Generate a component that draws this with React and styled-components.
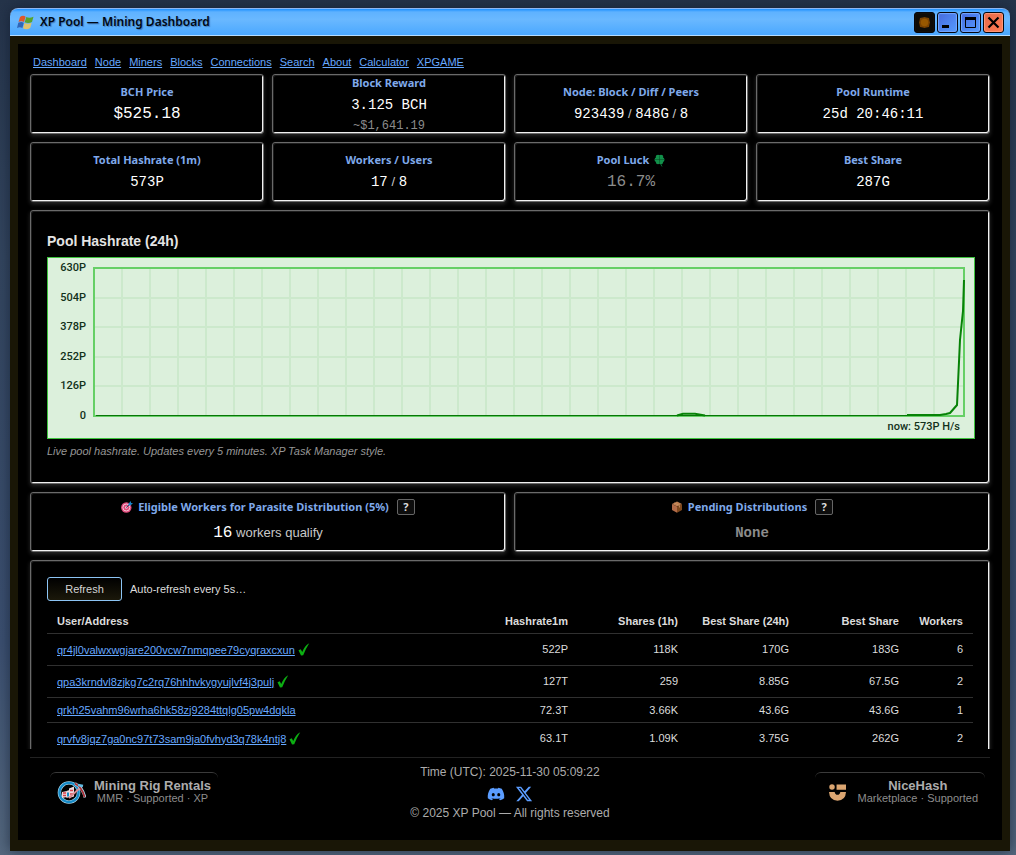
import { useState } from "react";
import styled, { createGlobalStyle } from "styled-components";
import { FaDiscord } from "react-icons/fa";
import { FaXTwitter } from "react-icons/fa6";

const GlobalStyle = createGlobalStyle`
	* {
		box-sizing: border-box;
	}

	body {
		margin: 0;
		background: #000;
		color: #dcdcdc;
		font-family: "Liberation Sans", Arial, sans-serif;
		font-size: 11px;
	}

	a {
		color: #66a8ff;
	}
`;

const Desktop = styled.div`
	height: 100vh;
	padding: 8px 6px 4px 10px;
	background: linear-gradient(#25344a, #34465f 30%, #3c5070 75%, #55687e);
`;

const Window = styled.div`
	display: flex;
	flex-direction: column;
	height: 100%;
	border-radius: 8px 8px 0 0;
	background: #191606;
	box-shadow: 0 0 14px rgba(10, 20, 40, 0.6);
`;

const TitleBar = styled.header`
	display: flex;
	align-items: center;
	gap: 6px;
	height: 28px;
	padding: 0 6px 0 7px;
	border-top: 1px solid #8fb6f2;
	border-bottom: 1px solid #b5dcff;
	border-radius: 8px 8px 0 0;
	background: linear-gradient(#1d90ff, #5fb2ff 3px, #6ab8ff 40%, #5ab0ff 70%, #4ba8ff);

	h1 {
		flex: 1;
		margin: 0;
		color: #000814;
		font: 600 12px/16px "Noto Sans", sans-serif;
		text-shadow: 1px 1px 1px rgba(0, 20, 60, 0.35);
	}
`;

const Controls = styled.div`
	display: flex;
	gap: 2px;
`;

const ControlButton = styled.button`
	display: flex;
	align-items: center;
	justify-content: center;
	width: 21px;
	height: 21px;
	padding: 0;
	border: 1px solid #05070d;
	border-radius: 3px;
	background: ${(props) => props.$background};
	box-shadow: inset 0 0 1px 1px ${(props) => props.$edge};
`;

const Body = styled.main`
	display: flex;
	flex: 1;
	flex-direction: column;
	min-height: 0;
	margin: 8px 8px 11px;
	background: #000;
`;

const Scroll = styled.div`
	display: flex;
	flex: 1;
	flex-direction: column;
	gap: 8px;
	min-height: 0;
	padding: 10px 12px 0;
	overflow: auto;
	scrollbar-width: none;

	> * {
		flex-shrink: 0;
	}
`;

const Nav = styled.nav`
	display: flex;
	gap: 8px;
	height: 12px;
	padding: 0 3px;
	line-height: 16px;
`;

const CardGrid = styled.div`
	display: grid;
	grid-template-columns: repeat(${(props) => props.$columns}, 1fr);
	gap: 8px;
`;

const Panel = styled.section`
	padding: 16px 14px 16px 16px;
	border: 1px solid #6a6a6a;
	border-radius: 3px;
	background: #000;
	box-shadow: inset -1px -1px 0 #f2f2f2, inset 1px 1px 0 #1e1e1e,
		0 2px 4px rgba(255, 255, 255, 0.16);
`;

const Card = styled(Panel)`
	display: flex;
	flex-direction: column;
	align-items: center;
	justify-content: center;
	gap: ${(props) => (props.$wide ? 8 : 4)}px;
	height: 60px;
	padding: 0 0 ${(props) => (props.$wide ? 2 : 0)}px;
`;

const CardTitle = styled.h2`
	display: flex;
	align-items: center;
	gap: 5px;
	margin: 0;
	color: #7fa9ea;
	font: 700 11px/16px "Noto Sans", sans-serif;
`;

const CardValue = styled.div`
	color: ${(props) => (props.$muted ? "#8c8c8c" : "#fff")};
	font: ${(props) => (props.$bold ? 700 : 400)} ${(props) => props.$size || 14}px/20px
		"Liberation Mono", monospace;

	span {
		color: #c8c8c8;
		font: 13px/20px "Liberation Sans", sans-serif;
	}
`;

const CardNote = styled.div`
	color: #8c8c8c;
	font: 12px/14px "Liberation Mono", monospace;
`;

const HelpButton = styled.button`
	width: 18px;
	height: 16px;
	margin-left: 3px;
	padding: 0;
	border: 1px solid #666;
	border-radius: 2px;
	background: #0d0d0d;
	color: #ddd;
	font: 700 11px/12px "Noto Sans", sans-serif;
`;

const ChartTitle = styled.h2`
	margin: 4px 0 6px;
	color: #e4e4e4;
	font-size: 14px;
	line-height: 20px;
`;

const Chart = styled.svg`
	display: block;
	width: 100%;
	height: auto;
	background: #dcf0dc;

	text {
		fill: #12301a;
		font: 500 11px Roboto, sans-serif;
		text-anchor: end;
	}
`;

const ChartNote = styled.p`
	margin: 4px 0 8px;
	color: #969696;
	font-style: italic;
	line-height: 16px;
`;

const Toolbar = styled.div`
	display: flex;
	align-items: center;
	gap: 8px;
	height: 24px;
`;

const RefreshButton = styled.button`
	width: 75px;
	height: 24px;
	border: 1px solid #8cc4f4;
	border-radius: 3px;
	background: linear-gradient(#000, #1b180a);
	color: #d4d4d4;
	font: 11px "Liberation Sans", sans-serif;
`;

const Table = styled.table`
	width: calc(100% - 2px);
	margin-top: 6px;
	border-collapse: collapse;
	table-layout: fixed;

	th,
	td {
		padding: 0 10px;
		border-bottom: 1px solid #303030;
		text-align: right;
		white-space: nowrap;
	}

	th {
		height: 26px;
		padding-top: 2px;
	}

	th:first-child,
	td:first-child {
		text-align: left;
	}
`;

const Row = styled.tr`
	height: ${(props) => (props.$verified ? 32 : 25)}px;

	svg {
		margin-left: 3px;
		vertical-align: -2px;
	}
`;

const Footer = styled.footer`
	display: grid;
	grid-template-columns: 1fr auto 1fr;
	align-items: start;
	height: 83px;
	margin: 8px 12px 0;
	padding-top: 5px;
	border-top: 1px solid #222;
	color: #acacac;
	font-size: 12px;
	text-align: center;
`;

const Partner = styled.a`
	display: flex;
	align-items: center;
	justify-self: ${(props) => props.$side};
	gap: ${(props) => (props.$side === "end" ? 12 : 8)}px;
	height: 39px;
	margin: 9px 5px 0 20px;
	padding: 0 7px 0 ${(props) => (props.$side === "end" ? 14 : 7)}px;
	border-top: 1px solid #3a3a3a;
	border-radius: 6px;
	color: inherit;
	line-height: 12px;
	text-decoration: none;

	strong {
		display: block;
		font-size: 13px;
	}

	small {
		color: #8d8d8d;
		font-size: 11px;
	}
`;

const Legal = styled.div`
	line-height: 18px;
`;

const Social = styled.div`
	display: flex;
	justify-content: center;
	gap: 10px;
	height: 23px;
	padding-top: 4px;

	a {
		height: 18px;
		color: #5b9dff;
	}
`;

const links = ["Dashboard", "Node", "Miners", "Blocks", "Connections", "Search", "About", "Calculator", "XPGAME"];

const workers = [
	["qr4jl0valwxwgjare200vcw7nmqpee79cyqraxcxun", true, "522P", "118K", "170G", "183G", 6],
	["qpa3krndvl8zjkg7c2rq76hhhvkygyujlvf4j3pulj", true, "127T", "259", "8.85G", "67.5G", 2],
	["qrkh25vahm96wrha6hk58zj9284ttqlg05pw4dqkla", false, "72.3T", "3.66K", "43.6G", "43.6G", 1],
	["qrvfv8jqz7ga0nc97t73sam9ja0fvhyd3q78k4ntj8", true, "63.1T", "1.09K", "3.75G", "262G", 2],
];

const FlagIcon = () => (
	<svg width="17" height="15" viewBox="0 0 17 15">
		<path d="M3 2C5 .5 7 .5 8.6 1.7L7 7C5.300 5.900 3.500 6 1.500 7z" fill="#e0572a" />
		<path d="M9.300 2C11.500 3 13.500 3 16.500 1.700L15 7C12.500 8.300 10 8.300 7.700 7.200z" fill="#58a42c" />
		<path d="M1.300 7.700C3.300 6.700 5 6.600 6.800 7.700L5.400 13C3.600 11.800 2 11.900 0 13z" fill="#2f66b8" />
		<path d="M7.500 8C9.700 9 12 9.100 14.700 7.800L13.200 13C10.500 14.600 8 14.400 6 13.300z" fill="#e0c26c" />
	</svg>
);

const CloverIcon = () => (
	<svg width="11" height="13" viewBox="0 0 11 13">
		<path d="M6 6Q6 10 8 12.500" fill="none" stroke="#08682f" />
		<g fill="#12904a">
			<circle cx="4" cy="3" r="2.300" />
			<circle cx="7" cy="3" r="2.300" />
			<circle cx="2.800" cy="5.800" r="2.300" />
			<circle cx="8.200" cy="5.800" r="2.300" />
			<circle cx="4" cy="8" r="2.200" />
			<circle cx="7" cy="8" r="2.200" />
		</g>
		<path d="M5.500 1.500v8M1 5.500h9" stroke="#0a5e2e" strokeWidth=".7" />
	</svg>
);

const TargetIcon = () => (
	<svg width="12" height="12" viewBox="0 0 12 12">
		<circle cx="5.300" cy="6.500" r="5.200" fill="#e0487a" />
		<circle cx="5.300" cy="6.500" r="3.500" fill="none" stroke="#f5c6d5" />
		<circle cx="5.300" cy="6.500" r="1.300" fill="#f5c6d5" />
		<path d="M5.300 6.500L9 3" stroke="#24405c" />
		<path d="M7.500 2.500L10 0v2h2L9.500 4.500h-2z" fill="#1684c8" />
	</svg>
);

const BoxIcon = () => (
	<svg width="12" height="12" viewBox="0 0 12 12">
		<path d="M1 3L6 .6 11 3 6 5.500z" fill="#bd7e50" />
		<path d="M1 3L6 5.500V11.700L1 9z" fill="#b26b48" />
		<path d="M11 3L6 5.500V11.700L11 9z" fill="#80491e" />
		<path d="M3.300 1.900L8.500 4.500v2" fill="none" stroke="#c99468" strokeWidth=".8" />
	</svg>
);

const CheckIcon = () => (
	<svg width="12" height="13" viewBox="0 0 12 13">
		<path d="M.5 7.200L2.800 6.300 4.200 9C5.900 5 7.900 2 11.200.300 8.700 4.200 6.700 8.200 5.200 12.300L3 12.500z" fill="#0cae12" />
	</svg>
);

const RigIcon = () => (
	<svg width="29" height="24" viewBox="0 0 29 24">
		<circle cx="12" cy="12.500" r="9.600" fill="none" stroke="#b5dcef" strokeWidth="3.400" />
		<circle cx="12" cy="12.500" r="9.600" fill="none" stroke="#168bc7" strokeWidth="2.300" />
		<path d="M5 12l5-1v6l-5 1zM9.500 11l3-1v7l-3 1zM12 8.500l5-2v10l-5 1.500z" fill="#ecd9df" />
		<path d="M6 13h3M6 15.500h3M13 10.500h3M13 14h3" stroke="#d7434d" strokeWidth="1.600" />
		<path d="M11 12.500v4" stroke="#168bc7" strokeWidth="2" />
		<path d="M12 18L25 6" stroke="#d98b91" strokeWidth="1.900" />
		<path d="M18 3.500C22.500 6 26.500 10.500 28 17.500" fill="none" stroke="#b5dcef" strokeWidth="2.800" />
		<path d="M18 3.500C22.500 6 26 10.500 27.500 17" fill="none" stroke="#a92c32" strokeWidth="1.800" />
		<path d="M21 5l5 1" stroke="#63bce4" strokeWidth="2.500" />
	</svg>
);

const NiceHashIcon = () => (
	<svg width="17" height="17" viewBox="0 0 18 18" fill="#dba571">
		<circle cx="3.200" cy="3.200" r="2.900" />
		<path d="M8 .400h10v5.600H8zM0 8.500h6Q6.500 11.500 9 11.500T12 8.500h6Q17.500 17.500 9 17.700 0.500 17.500 0 8.500z" />
	</svg>
);

const HashrateChart = () => {
	const columns = Array.from({ length: 30 }, (_, i) => 75 + i * 28);
	const ticks = ["630P", "504P", "378P", "252P", "126P", "0"];

	return (
		<Chart viewBox="0 0 928 182" role="img" aria-label="Pool hashrate, last 24 hours">
			<rect x=".5" y=".5" width="927" height="181" fill="none" stroke="#3ec43e" />
			<g stroke="#cce9cc" strokeWidth="2">
				{columns.map((x) => (
					<path key={x} d={`M${x} 11V159`} />
				))}
				{[41, 70, 100, 129].map((y) => (
					<path key={y} d={`M47 ${y}H917`} />
				))}
			</g>
			<rect x="47" y="11" width="870" height="148" fill="none" stroke="#66cf66" strokeWidth="2" />
			<path d="M49 158.500H860" stroke="#087508" />
			<path
				d="M630 158.500L636 156.700H648L658 158.500M860 158H893L899 157 903 156 910 148 913 83 916 54 917 23"
				fill="none"
				stroke="#078207"
				strokeWidth="2"
			/>
			{ticks.map((tick, i) => (
				<text key={tick} x="39" y={14 + Math.round(i * 29.6)}>{tick}</text>
			))}
			<text x="913" y="173">now: 573P H/s</text>
		</Chart>
	);
};

const App = () => {
	const [rows, setRows] = useState(workers);

	return (
		<>
			<GlobalStyle />
			<Desktop>
				<Window>
					<TitleBar>
						<FlagIcon />
						<h1>XP Pool — Mining Dashboard</h1>
						<Controls>
							<ControlButton aria-label="Theme" $background="#0e0c07" $edge="#14110a">
								<svg width="13" height="13" viewBox="0 0 13 13">
									<path d="M6.500 1L8.300 1.500 11 2 11.500 4.700 12 6.500 11.500 8.300 11 11 8.300 11.500 6.500 12 4.700 11.500 2 11 1.500 8.300 1 6.500 1.500 4.700 2 2 4.700 1.500z" fill="#7b4300" />
									<circle cx="6.500" cy="6.500" r="3.700" fill="#985800" />
								</svg>
							</ControlButton>
							<ControlButton aria-label="Minimize" $background="linear-gradient(135deg, #4769dc, #559cff)" $edge="#74a8ff">
								<svg width="15" height="15" viewBox="0 0 15 15">
									<path d="M2 10h7v3H2z" />
								</svg>
							</ControlButton>
							<ControlButton aria-label="Maximize" $background="linear-gradient(135deg, #4769dc, #559cff)" $edge="#74a8ff">
								<svg width="11" height="11" viewBox="0 0 11 11">
									<path d="M.5 1.500h10v9H.5z" fill="none" stroke="#000" />
									<path d="M0 0h11v3H0z" />
								</svg>
							</ControlButton>
							<ControlButton aria-label="Close" $background="linear-gradient(135deg, #e46a48, #ff7b55)" $edge="#ff9a7b">
								<svg width="13" height="13" viewBox="0 0 13 13">
									<path d="M1.500 1.500l10 10M11.500 1.500l-10 10" stroke="#000" strokeWidth="2.200" />
								</svg>
							</ControlButton>
						</Controls>
					</TitleBar>

					<Body>
						<Scroll>
							<Nav>
								{links.map((link) => (
									<a key={link} href={`#${link.toLowerCase()}`}>{link}</a>
								))}
							</Nav>

							<CardGrid $columns={4}>
								<Card>
									<CardTitle>BCH Price</CardTitle>
									<CardValue $size={16}>$525.18</CardValue>
								</Card>
								<Card>
									<CardTitle>Block Reward</CardTitle>
									<CardValue>3.125 BCH</CardValue>
									<CardNote>~$1,641.19</CardNote>
								</Card>
								<Card>
									<CardTitle>Node: Block / Diff / Peers</CardTitle>
									<CardValue>923439<span> / </span>848G<span> / </span>8</CardValue>
								</Card>
								<Card>
									<CardTitle>Pool Runtime</CardTitle>
									<CardValue>25d 20:46:11</CardValue>
								</Card>
								<Card>
									<CardTitle>Total Hashrate (1m)</CardTitle>
									<CardValue>573P</CardValue>
								</Card>
								<Card>
									<CardTitle>Workers / Users</CardTitle>
									<CardValue>17<span> / </span>8</CardValue>
								</Card>
								<Card>
									<CardTitle>Pool Luck <CloverIcon /></CardTitle>
									<CardValue $muted $size={16}>16.7%</CardValue>
								</Card>
								<Card>
									<CardTitle>Best Share</CardTitle>
									<CardValue>287G</CardValue>
								</Card>
							</CardGrid>

							<Panel>
								<ChartTitle>Pool Hashrate (24h)</ChartTitle>
								<HashrateChart />
								<ChartNote>Live pool hashrate. Updates every 5 minutes. XP Task Manager style.</ChartNote>
							</Panel>

							<CardGrid $columns={2}>
								<Card $wide>
									<CardTitle>
										<TargetIcon />
										Eligible Workers for Parasite Distribution (5%)
										<HelpButton aria-label="About eligible workers">?</HelpButton>
									</CardTitle>
									<CardValue $size={16}>16<span> workers qualify</span></CardValue>
								</Card>
								<Card $wide>
									<CardTitle>
										<BoxIcon />
										Pending Distributions
										<HelpButton aria-label="About pending distributions">?</HelpButton>
									</CardTitle>
									<CardValue $muted $bold>None</CardValue>
								</Card>
							</CardGrid>

							<Panel>
								<Toolbar>
									<RefreshButton onClick={() => setRows([...workers])}>Refresh</RefreshButton>
									Auto-refresh every 5s…
								</Toolbar>
								<Table>
									<colgroup>
										<col />
										<col width="146" />
										<col width="110" />
										<col width="111" />
										<col width="110" />
										<col width="64" />
									</colgroup>
									<thead>
										<tr>
											<th>User/Address</th>
											<th>Hashrate1m</th>
											<th>Shares (1h)</th>
											<th>Best Share (24h)</th>
											<th>Best Share</th>
											<th>Workers</th>
										</tr>
									</thead>
									<tbody>
										{rows.map(([address, verified, ...cells]) => (
											<Row key={address} $verified={verified}>
												<td>
													<a href={`#${address}`}>{address}</a>
													{verified && <CheckIcon />}
												</td>
												{cells.map((cell, i) => (
													<td key={i}>{cell}</td>
												))}
											</Row>
										))}
									</tbody>
								</Table>
							</Panel>
						</Scroll>

						<Footer>
							<Partner href="#mining-rig-rentals" $side="start">
								<RigIcon />
								<div>
									<strong>Mining Rig Rentals</strong>
									<small>MMR · Supported · XP</small>
								</div>
							</Partner>
							<Legal>
								<div>Time (UTC): 2025-11-30 05:09:22</div>
								<Social>
									<a href="#discord" aria-label="Discord"><FaDiscord size={18} /></a>
									<a href="#x" aria-label="X"><FaXTwitter size={18} /></a>
								</Social>
								<div>© 2025 XP Pool — All rights reserved</div>
							</Legal>
							<Partner href="#nicehash" $side="end">
								<NiceHashIcon />
								<div>
									<strong>NiceHash</strong>
									<small>Marketplace · Supported</small>
								</div>
							</Partner>
						</Footer>
					</Body>
				</Window>
			</Desktop>
		</>
	);
};

export default App;
